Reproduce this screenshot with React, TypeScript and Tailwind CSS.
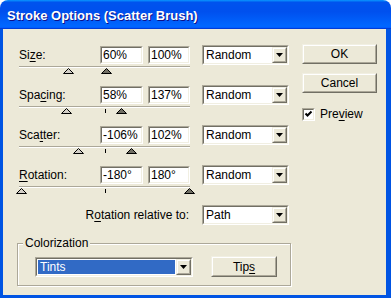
import React from 'react';

type BoxProps = { className?: string; children?: React.ReactNode };

function Sunken({ className = '', children }: BoxProps) {
  return (
    <div className={`border border-t-[#aca899] border-l-[#aca899] border-r-white border-b-white ${className}`}>
      <div className="h-full border border-t-[#716f64] border-l-[#716f64] border-r-[#f1efe2] border-b-[#f1efe2] bg-white">
        {children}
      </div>
    </div>
  );
}

function Raised({ className = '', children }: BoxProps) {
  return (
    <div className={`border border-t-[#f1efe2] border-l-[#f1efe2] border-r-[#716f64] border-b-[#716f64] bg-[#ece9d8] ${className}`}>
      <div className="flex h-full items-center justify-center border border-t-white border-l-white border-r-[#aca899] border-b-[#aca899]">
        {children}
      </div>
    </div>
  );
}

function Arrow() {
  return (
    <svg width="7" height="4" viewBox="0 0 7 4">
      <polygon points="0,0 7,0 3.5,4" fill="#000" />
    </svg>
  );
}

function Combo({ value, className = '', selected }: { value: string; className?: string; selected?: boolean }) {
  return (
    <Sunken className={`h-[20px] ${className}`}>
      <div className="flex h-full">
        {selected ? (
          <div className="m-px flex flex-1 items-center bg-[#316ac5] pl-[2px] text-white">{value}</div>
        ) : (
          <div className="flex flex-1 items-center pl-[2px]">{value}</div>
        )}
        <Raised className="w-[15px]">
          <Arrow />
        </Raised>
      </div>
    </Sunken>
  );
}

function Field({ value, className = '' }: { value: string; className?: string }) {
  return (
    <Sunken className={`h-[18px] ${className}`}>
      <div className="flex h-full items-center pl-px">{value}</div>
    </Sunken>
  );
}

function Thumb({ x, dark }: { x: number; dark?: boolean }) {
  return (
    <svg className="absolute top-[2px]" style={{ left: x - 5 }} width="11" height="6" viewBox="0 0 11 6">
      <polygon
        points="5.5,0.5 10.5,5.5 0.5,5.5"
        fill={dark ? '#716f64' : '#d4d0c8'}
        stroke="#000"
        strokeWidth="1"
        strokeLinejoin="round"
      />
    </svg>
  );
}

const rows = [
  { label: ['Si', 'z', 'e:'], min: '60%', max: '100%', lo: 49, hi: 87, tick: false },
  { label: ['Spa', 'c', 'ing:'], min: '58%', max: '137%', lo: 47, hi: 102, tick: true },
  { label: ['Sca', 't', 'ter:'], min: '-106%', max: '102%', lo: 59, hi: 112, tick: true },
  { label: ['', 'R', 'otation:'], min: '-180°', max: '180°', lo: 2, hi: 170, tick: true },
];

function SliderRow({ row }: { row: (typeof rows)[number] }) {
  return (
    <div className="mb-[11px]">
      <div className="flex h-[20px] items-center">
        <div className="w-[81px]">
          {row.label[0]}
          <span className="underline underline-offset-[2px]">{row.label[1]}</span>
          {row.label[2]}
        </div>
        <Field value={row.min} className="w-[43px]" />
        <Field value={row.max} className="ml-[5px] w-[42px]" />
        <Combo value="Random" className="ml-[12px] w-[87px]" />
      </div>
      <div className="relative mt-px h-[8px] w-[171px]">
        <div className="h-px bg-[#aca899]" />
        <div className="h-px bg-white" />
        {row.tick && <div className="absolute left-[86px] top-[3px] h-[4px] w-px bg-black" />}
        <Thumb x={row.lo} />
        <Thumb x={row.hi} dark />
      </div>
    </div>
  );
}

export default function App() {
  return (
    <div className="h-[298px] w-[391px] bg-white font-['Liberation_Sans',Arial,sans-serif] text-[12px] leading-[14px] text-black">
      <div className="flex h-[29px] items-center rounded-t-[8px] bg-[linear-gradient(to_bottom,#0997ff_0%,#0053ee_8%,#0050ee_40%,#0066ff_88%,#0066ff_93%,#005bff_95%,#003dd7_96%,#003dd7_100%)] pl-[7px] pt-[2px]">
        <span className="text-[13px] font-bold text-white [text-shadow:1px_1px_#0f1089]">
          Stroke Options (Scatter Brush)
        </span>
      </div>
      <div className="flex h-[269px] border-b-[3px] border-l-[3px] border-r-[5px] border-[#0054e3]">
        <div className="flex flex-1 bg-[#ece9d8] pl-[16px] pt-[15px]">
          <div className="mt-px w-[270px]">
            {rows.map((row) => (
              <SliderRow key={row.min} row={row} />
            ))}
            <div className="flex h-[20px] items-center">
              <div className="flex-1 pr-[13px] text-right">
                R<span className="underline underline-offset-[2px]">o</span>tation relative to:
              </div>
              <Combo value="Path" className="w-[87px]" />
            </div>
            <fieldset className="-ml-[2px] mt-[11px] w-[274px] border border-[#aca899] pb-[8px] pt-[6px] shadow-[inset_1px_1px_0_#fff,1px_1px_0_#fff]">
              <legend className="ml-[5px] bg-[#ece9d8] px-[2px]">Colorization</legend>
              <div className="flex items-center">
                <Combo value="Tints" selected className="ml-[17px] w-[158px]" />
                <Raised className="ml-[18px] h-[21px] w-[66px]">
                  Tip<span className="underline underline-offset-[2px]">s</span>
                </Raised>
              </div>
            </fieldset>
          </div>
          <div className="ml-[13px] flex flex-col">
            <Raised className="h-[20px] w-[75px]">OK</Raised>
            <Raised className="mt-[9px] h-[20px] w-[75px]">Cancel</Raised>
            <div className="mt-[14px] flex items-center">
              <Sunken className="h-[13px] w-[13px]">
                <svg width="9" height="9" viewBox="0 0 9 9" className="block">
                  <polyline points="1.5,3.5 3.5,5.5 7.5,1.5" fill="none" stroke="#000" strokeWidth="2" />
                </svg>
              </Sunken>
              <span className="ml-[5px]">
                Pre<span className="underline underline-offset-[2px]">v</span>iew
              </span>
            </div>
          </div>
        </div>
      </div>
    </div>
  );
}
